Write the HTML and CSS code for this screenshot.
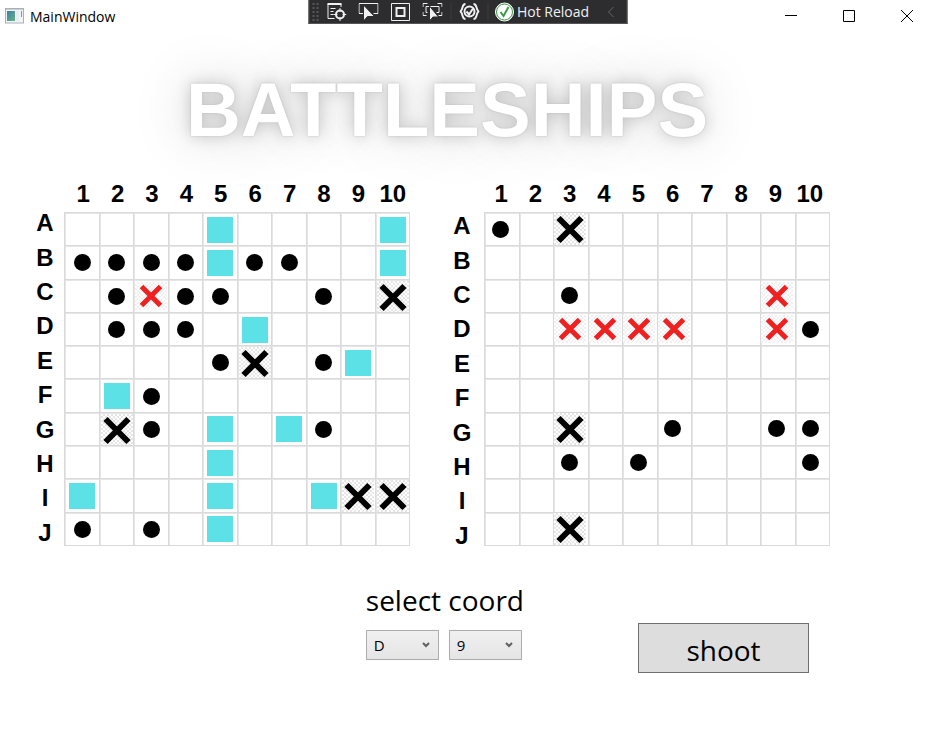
FILE: index.html
```html
<!DOCTYPE html>
<html lang="en">
<head>
<meta charset="utf-8">
<title>MainWindow</title>
<link rel="stylesheet" href="styles.css">
</head>
<body>
<header class="titlebar">
  <svg class="app-icon" width="19" height="16" viewBox="0 0 19 16" aria-hidden="true">
    <defs><linearGradient id="pane" x1="0" y1="0" x2="1" y2="1"><stop offset="0" stop-color="#3f7f9f"/><stop offset="1" stop-color="#63b489"/></linearGradient></defs>
    <rect x=".5" y=".5" width="18" height="14.500" fill="#f3f4f6" stroke="#aab0b8"/>
    <path d="M1 1.500h17" stroke="#c9ced4"/>
    <rect x="2" y="3" width="8" height="10" fill="url(#pane)"/>
    <path d="M11 3h3v10h-3z" fill="#e9edf2"/>
    <path d="M16.500 3v6" stroke="#63a792"/>
  </svg>
  <span class="window-name">MainWindow</span>
  <div class="window-buttons">
    <button aria-label="Minimize"><svg width="12" height="12" viewBox="0 0 12 12"><path d="M0 5.500h12"/></svg></button>
    <button aria-label="Maximize"><svg width="12" height="12" viewBox="0 0 12 12"><path d="M.5 .5h11v11H.5z"/></svg></button>
    <button aria-label="Close"><svg width="12" height="12" viewBox="0 0 12 12"><path d="M0 0l12 12M12 0L0 12"/></svg></button>
  </div>
  <div class="debug-bar" role="toolbar" aria-label="Debug tools">
    <span class="grip"></span>
    <button aria-label="Live visual tree"><svg width="20" height="20" viewBox="0 0 20 20"><path class="thick" d="M1 2h14"/><path d="M1.500 2v14.500H8M14.500 2v3M4 6.500h5M4 9.500h3M4 12.500h3"/><circle class="thick" cx="13.500" cy="12.500" r="4"/><path d="M13.500 6v4M13.500 15v4M7 12.500h4M16 12.500h4"/></svg></button>
    <button aria-label="Select element"><svg width="20" height="20" viewBox="0 0 20 20"><path d="M5 11.500H.5v-10h19v10H15"/><path class="solid" d="M5 3v16l4-4.500h7z"/></svg></button>
    <button aria-label="Layout adorners"><svg width="20" height="20" viewBox="0 0 20 20"><path d="M1 1.500h18v17H1z"/><path class="thick" d="M6 6h8v8H6z"/></svg></button>
    <button aria-label="Track focus"><svg width="20" height="20" viewBox="0 0 20 20"><path d="M.5 5V1.500H5M15 1.500h4.500V5M.5 10v3.500H4M19.500 10v3.500H16"/><path d="M5 10.500H3.500v-6h13v6H14"/><path class="solid" d="M7 4v15l3.500-4H16z"/></svg></button>
    <i class="divider"></i>
    <button aria-label="Binding failures"><svg width="20" height="20" viewBox="0 0 20 20"><path class="thick" d="M6 2C2 2 4 7 1 9.500 4 12 2 17 6 17M14 2c4 0 2 5 5 7.500-3 2.500-1 7.500-5 7.500"/><circle class="thick" cx="10" cy="9.500" r="5"/><path class="thick" d="M7 9.500l2.500 3 4-6"/></svg></button>
    <i class="divider"></i>
    <button class="reload"><svg width="20" height="20" viewBox="0 0 20 20"><circle class="badge" cx="10" cy="10" r="9"/><circle class="ring" cx="10" cy="10" r="8"/><path class="tick" d="M6 10l3 4 5-9"/></svg>Hot Reload</button>
    <button class="collapse" aria-label="Collapse"><svg width="8" height="12" viewBox="0 0 8 12"><path d="M7 1L2 6l5 5"/></svg></button>
  </div>
</header>
<main>
  <h1>BATTLESHIPS</h1>
  <div class="boards">
    <section class="board own" aria-label="Your board" data-marks="....s....s/oooosoo..s/.oroo..o.x/.ooo.s..../....ox.os./.so......./.xo.s.so../....s...../s...s..sxx/o.o.s....."></section>
    <section class="board target" aria-label="Target board" data-marks="o.x......./........../..o.....r./..rrrr..ro/........../........../..x..o..oo/..o.o....o/........../..x......."></section>
  </div>
  <form class="controls" onsubmit="return false">
    <fieldset>
      <legend>select coord</legend>
      <div class="pickers">
        <select aria-label="Row"><option>A</option><option>B</option><option>C</option><option selected>D</option><option>E</option><option>F</option><option>G</option><option>H</option><option>I</option><option>J</option></select>
        <select aria-label="Column"><option>1</option><option>2</option><option>3</option><option>4</option><option>5</option><option>6</option><option>7</option><option>8</option><option selected>9</option><option>10</option></select>
      </div>
    </fieldset>
    <button class="shoot">shoot</button>
  </form>
</main>
<script src="board.js"></script>
</body>
</html>
```
FILE: board.js
```js
const marks = {
  s: '<span class="ship"></span>',
  o: '<span class="miss"></span>',
  x: '<svg class="sunk" width="32" height="33" viewBox="0 0 32 33"><path d="M4.500 5l23 23M27.500 5l-23 23"/></svg>',
  r: '<svg class="hit" width="32" height="28" viewBox="0 0 32 28"><path d="M6.500 4.500l19 19M25.500 4.500l-19 19"/></svg>'
};
document.querySelectorAll('.board').forEach(board => {
  const columns = Array.from({ length: 10 }, (_, i) => `<span>${i + 1}</span>`).join('');
  const rows = [...'ABCDEFGHIJ'].map(c => `<span>${c}</span>`).join('');
  const cells = [...board.dataset.marks.replaceAll('/', '')]
    .map(c => `<div class="cell">${marks[c] || ''}</div>`).join('');
  board.innerHTML = `<div class="columns">${columns}</div><div class="rows">${rows}</div><div class="cells">${cells}</div>`;
});
```
FILE: styles.css
```css
* { box-sizing: border-box; }
body { margin: 0; background: #fff; color: #000; font-family: "Open Sans", "Noto Sans", sans-serif; }
button { margin: 0; padding: 0; border: 0; background: none; font: inherit; color: inherit; }
svg { display: block; fill: none; stroke: currentColor; }

.titlebar { position: relative; display: flex; align-items: center; height: 32px; padding-left: 5px; }
.app-icon { stroke: none; }
.window-name { margin-left: 6px; font-size: 14px; }
.window-buttons { display: flex; gap: 2px; margin-left: auto; }
.window-buttons button { display: grid; place-items: center; width: 56px; height: 32px; }

.debug-bar { position: absolute; top: 0; left: 50%; transform: translateX(-50%); display: flex; align-items: center; width: 319px; height: 24px; border: 1px solid #555; border-top: 0; background: #2d2d30; color: #f0f0f0; font-size: 14px; }
.debug-bar button { display: flex; align-items: center; justify-content: center; flex: 0 0 32px; white-space: nowrap; }
.debug-bar .solid { fill: currentColor; stroke: #2d2d30; }
.debug-bar .thick { stroke-width: 2; }
.grip { width: 8px; height: 20px; margin: 0 1px 0 2px; background: radial-gradient(#56565a 1px, transparent 1px) 0 0 / 4px 4px; }
.divider { width: 1px; height: 18px; margin: 0 2px; background: #3c3c40; }
.debug-bar .reload { flex: 0 0 104px; gap: 2px; }
.debug-bar .collapse { flex: 1; color: #666; }
.badge { fill: #fff; stroke: #fff; }
.ring { stroke: #389b45; }
.tick { stroke: #389b45; stroke-width: 2; }

main { padding: 0 105px 0 34px; }
h1 { margin: 0 -30px 0 0; padding-top: 34px; color: #fff; text-align: center; font: bold 76px/88px "Liberation Sans", sans-serif; text-shadow: 0 0 2px #bbb, 0 0 16px rgba(0, 0, 0, .22), 0 0 56px rgba(0, 0, 0, .22); }
.boards { display: grid; grid-template-columns: 375px 378px; justify-content: space-between; padding-top: 26px; font: bold 24px/28px "Liberation Sans", sans-serif; }
.board { display: grid; grid-template-columns: auto 346px; grid-template-rows: 32px auto; justify-content: space-between; }
.own { margin-right: -1px; }
.columns { display: grid; grid-template-columns: repeat(10, 1fr); margin: 0 0 0 2px; grid-column: 2; }
.target .columns { margin: 0 3px 0 0; }
.columns span { display: flex; justify-content: center; }
.rows { display: grid; grid-auto-rows: 1fr; width: 22px; margin: -6px 0 -4px; align-items: center; justify-items: center; }
.target .rows { width: 20px; margin: -3px 0 -7px; }
.cells { display: grid; grid-template-columns: repeat(10, 1fr); grid-template-rows: repeat(10, 1fr); aspect-ratio: 346 / 334; border: solid #dadada; border-width: 1px 0 0 1px; }
.cell { display: grid; place-items: center; min-width: 0; min-height: 0; overflow: hidden; border: solid #dadada; border-width: 0 1px 1px 0; box-shadow: inset 1px 1px #e6e6e6; }
.own .cell { padding: 1px 0 0 1px; }
.target .cell { padding-right: 3px; }
.ship { width: 26px; height: 26px; background: #5ce1e6; box-shadow: 0 0 0 2px #fff; }
.miss { width: 17px; height: 17px; border-radius: 50%; background: #000; }
.sunk, .hit { background: repeating-conic-gradient(#e6e6e6 0 25%, #fff 0 50%) 0 0 / 4px 4px; }
.sunk path { stroke: #000; stroke-width: 6; }
.hit { background: repeating-conic-gradient(#f1f1f1 0 25%, #fff 0 50%) 0 0 / 4px 4px; }
.hit path { stroke: #ef2020; stroke-width: 5; }

.controls { display: flex; justify-content: flex-end; padding: 34px 21px 0 0; }
fieldset { margin: 0; padding: 0; border: 0; }
legend { padding: 0; font-size: 28px; line-height: 40px; }
.pickers { display: flex; gap: 10px; padding-top: 10px; }
select { width: 73px; height: 30px; padding: 0 7px; border: 1px solid #acacac; border-radius: 0; appearance: none; color: #000; font: 15px "Open Sans", sans-serif; background: url("data:image/svg+xml,%3Csvg xmlns='http://www.w3.org/2000/svg' width='8' height='6'%3E%3Cpath d='M1 1l3 3 3-3' fill='none' stroke='%23606060' stroke-width='2'/%3E%3C/svg%3E") right 8px center no-repeat, linear-gradient(#f0f0f0, #e5e5e5); }
.shoot { width: 171px; height: 50px; margin: 43px 0 0 114px; padding-top: 4px; border: 1px solid #707070; background: #ddd; font-size: 28px; line-height: 44px; }
```
